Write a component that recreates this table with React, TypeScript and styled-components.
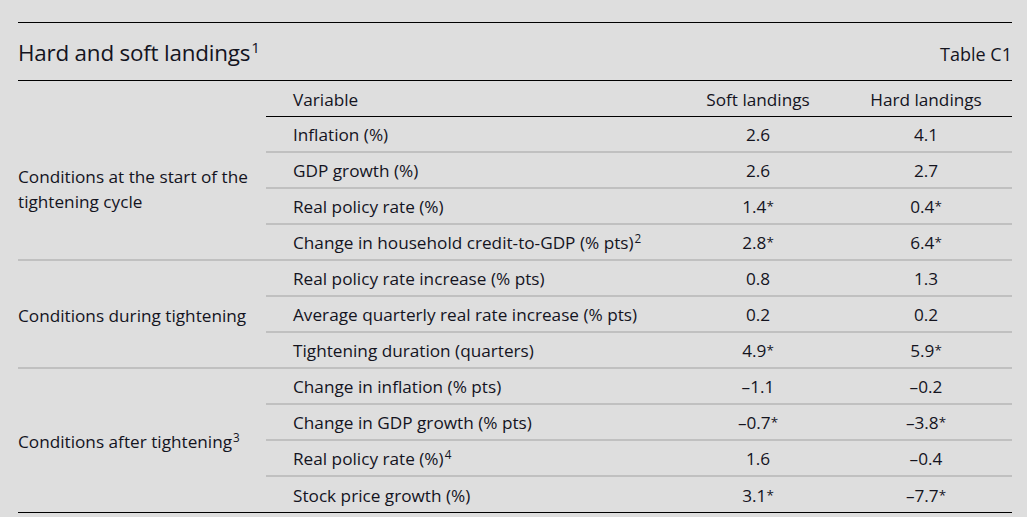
import React from 'react';
import styled, { createGlobalStyle } from 'styled-components';

const GlobalStyle = createGlobalStyle`
  html, body {
    margin: 0;
    padding: 0;
    background: #dedede;
  }
  body {
    font-family: 'Open Sans', 'Noto Sans', Arial, sans-serif;
    color: #14141e;
  }
`;

const Wrapper = styled.div`
  margin: 22px 15px 0 18px;
  width: 994px;
  border-top: 1px solid #000;
`;

const TitleBar = styled.div`
  display: flex;
  justify-content: space-between;
  align-items: baseline;
  box-sizing: border-box;
  height: 58px;
  padding-top: 14px;
  border-bottom: 1px solid #000;
`;

const Title = styled.h1`
  margin: 0;
  font-size: 22.4px;
  font-weight: 400;
  letter-spacing: -0.2px;
`;

const TableTag = styled.span`
  font-size: 18px;
`;

const Sup = styled.sup`
  font-size: 0.68em;
  line-height: 0;
  vertical-align: 0.55em;
  margin-left: 1px;
`;

const Star = styled.span`
  font-size: 0.78em;
  vertical-align: 0.12em;
`;

const Grid = styled.div`
  display: grid;
  grid-template-columns: 248px 410px 164px 172px;
  grid-auto-rows: 36px;
  font-size: 17.2px;
`;

type LineKind = 'dark' | 'light';

const Cell = styled.div<{ $line?: LineKind; $center?: boolean; $pad?: boolean }>`
  display: flex;
  align-items: center;
  justify-content: ${({ $center }) => ($center ? 'center' : 'flex-start')};
  box-sizing: border-box;
  padding-left: ${({ $pad }) => ($pad ? '27px' : '0')};
  padding-top: 1px;
  border-bottom: ${({ $line }) =>
    $line === 'dark' ? '1px solid #000' : $line === 'light' ? '2px solid #c0c0c0' : 'none'};
  white-space: nowrap;
`;

const GroupCell = styled.div<{ $span: number; $line: LineKind }>`
  grid-row: span ${({ $span }) => $span};
  display: flex;
  align-items: center;
  box-sizing: border-box;
  padding-right: 4px;
  border-bottom: ${({ $line }) => ($line === 'dark' ? '1px solid #000' : '2px solid #c0c0c0')};
`;

const GroupText = styled.div`
  line-height: 25px;
  padding-top: 2px;
`;

type Row = { label: React.ReactNode; soft: string; hard: string };
type Group = { title: React.ReactNode; rows: Row[] };

const groups: Group[] = [
  {
    title: 'Conditions at the start of the tightening cycle',
    rows: [
      { label: 'Inflation (%)', soft: '2.6', hard: '4.1' },
      { label: 'GDP growth (%)', soft: '2.6', hard: '2.7' },
      { label: 'Real policy rate (%)', soft: '1.4*', hard: '0.4*' },
      {
        label: (
          <>
            Change in household credit-to-GDP (% pts)<Sup>2</Sup>
          </>
        ),
        soft: '2.8*',
        hard: '6.4*',
      },
    ],
  },
  {
    title: 'Conditions during tightening',
    rows: [
      { label: 'Real policy rate increase (% pts)', soft: '0.8', hard: '1.3' },
      { label: 'Average quarterly real rate increase (% pts)', soft: '0.2', hard: '0.2' },
      { label: 'Tightening duration (quarters)', soft: '4.9*', hard: '5.9*' },
    ],
  },
  {
    title: (
      <>
        Conditions after tightening<Sup>3</Sup>
      </>
    ),
    rows: [
      { label: 'Change in inflation (% pts)', soft: '–1.1', hard: '–0.2' },
      { label: 'Change in GDP growth (% pts)', soft: '–0.7*', hard: '–3.8*' },
      {
        label: (
          <>
            Real policy rate (%)<Sup>4</Sup>
          </>
        ),
        soft: '1.6',
        hard: '–0.4',
      },
      { label: 'Stock price growth (%)', soft: '3.1*', hard: '–7.7*' },
    ],
  },
];

// a value like "1.4*" gets a smaller, raised asterisk
const Value: React.FC<{ v: string }> = ({ v }) =>
  v.endsWith('*') ? (
    <span>
      {v.slice(0, -1)}
      <Star>*</Star>
    </span>
  ) : (
    <span>{v}</span>
  );

// Table C1 from the box: soft vs hard landings
const App: React.FC = () => {
  return (
    <>
      <GlobalStyle />
      <Wrapper>
        <TitleBar>
          <Title>
            Hard and soft landings<Sup>1</Sup>
          </Title>
          <TableTag>Table C1</TableTag>
        </TitleBar>
        <Grid>
          <Cell />
          <Cell $line="dark" $pad>
            Variable
          </Cell>
          <Cell $line="dark" $center>
            Soft landings
          </Cell>
          <Cell $line="dark" $center>
            Hard landings
          </Cell>
          {groups.map((g, gi) => {
            const lastGroup = gi === groups.length - 1;
            return (
              <React.Fragment key={gi}>
                <GroupCell $span={g.rows.length} $line={lastGroup ? 'dark' : 'light'}>
                  <GroupText>{g.title}</GroupText>
                </GroupCell>
                {g.rows.map((r, ri) => {
                  const line = lastGroup && ri === g.rows.length - 1 ? 'dark' : 'light';
                  return (
                    <React.Fragment key={ri}>
                      <Cell $line={line} $pad>
                        <span>{r.label}</span>
                      </Cell>
                      <Cell $line={line} $center>
                        <Value v={r.soft} />
                      </Cell>
                      <Cell $line={line} $center>
                        <Value v={r.hard} />
                      </Cell>
                    </React.Fragment>
                  );
                })}
              </React.Fragment>
            );
          })}
        </Grid>
      </Wrapper>
    </>
  );
};

export default App;
